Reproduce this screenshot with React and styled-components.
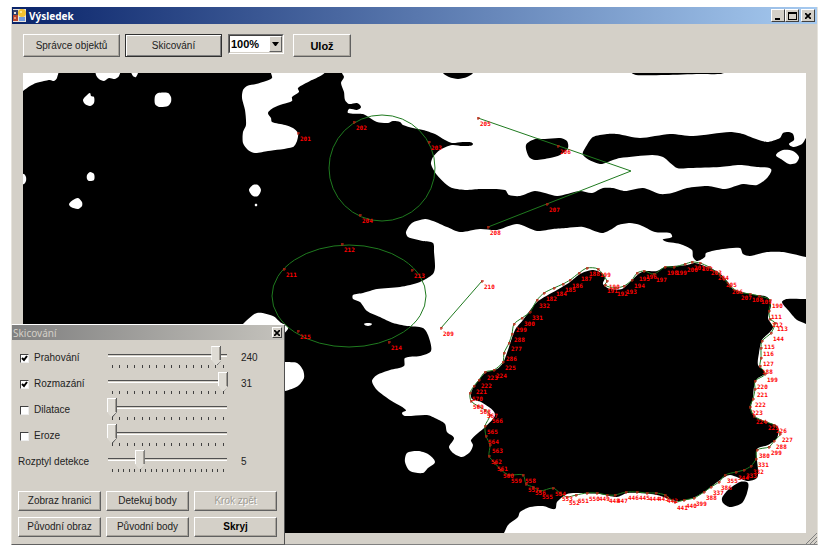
import React from "react";
import styled, { createGlobalStyle, css } from "styled-components";

const GlobalStyle = createGlobalStyle`
  * { box-sizing: border-box; }
  body {
    margin: 0;
    background: #ffffff;
    color: #222222;
    font-family: "Liberation Sans", Arial, sans-serif;
    font-size: 10px;
    line-height: 12px;
  }
`;

const face = "#d4d0c8";

const Desktop = styled.div`
  padding: 7px 0 2px 11px;
`;

const Window = styled.main`
  position: relative;
  background: ${face};
  border: 1px solid #e6e3dc;
  border-top: 0;
  border-bottom-color: #808080;
`;

const TitleBar = styled.header`
  display: flex;
  align-items: center;
  gap: 3px;
  height: 17px;
  padding: 0 2px 0 1px;
  background: linear-gradient(to right, #0a246a, #a6caf0);
`;

const Title = styled.h1`
  flex: 1;
  margin: 0;
  color: #ffffff;
  font: bold 10px/14px "Noto Sans", sans-serif;
`;

const CaptionGroup = styled.div`
  display: flex;
`;

const CaptionButton = styled.button`
  display: grid;
  place-items: center;
  width: 14px;
  height: 13px;
  padding: 0;
  margin-left: ${(p) => (p.$apart ? "2px" : "0")};
  background: ${face};
  border: 1px solid;
  border-color: #ffffff #404040 #404040 #ffffff;
  svg { display: block; }
`;

const Toolbar = styled.div`
  display: flex;
  align-items: flex-start;
  gap: 5px;
  padding: 10px 11px 16px;
`;

const Button = styled.button`
  width: ${(p) => p.$width || "100%"};
  height: ${(p) => (p.$tall ? "23px" : "20px")};
  padding: 0;
  background: ${face};
  color: #222222;
  border: 1px solid;
  border-color: #ffffff #606060 #606060 #ffffff;
  box-shadow: inset -1px -1px 0 #a8a49c;
  font: ${(p) => (p.$strong ? "bold " : "")}${(p) => (p.$tall && p.$strong ? "11px" : "10px")}/12px "Liberation Sans", Arial, sans-serif;
  ${(p) => p.$strong && css`color: #000000;`}
  ${(p) => p.$active && css`
    border-color: #303030;
    box-shadow: inset 1px 1px 0 #ffffff, inset -1px -1px 0 #808080;
  `}
  &:disabled {
    color: #a09c94;
    text-shadow: 1px 1px 0 #ffffff;
  }
`;

const ZoomBox = styled.label`
  position: relative;
  width: 56px;
  height: 20px;
  margin: 0 4px 0 1px;
  border: 1px solid;
  border-color: #707070 #ffffff #ffffff #707070;
  background: #ffffff;
`;

const ZoomSelect = styled.select`
  appearance: none;
  display: block;
  width: 100%;
  height: 18px;
  padding: 0 16px 0 1px;
  border: 1px solid;
  border-color: #404040 ${face} ${face} #404040;
  border-radius: 0;
  background: #ffffff;
  color: #000000;
  font: bold 11px/14px "Liberation Sans", Arial, sans-serif;
`;

const DropMark = styled.span`
  position: absolute;
  top: 1px;
  right: 1px;
  display: grid;
  place-items: center;
  width: 13px;
  height: 16px;
  background: ${face};
  border: 1px solid;
  border-color: #ffffff #606060 #606060 #ffffff;
  pointer-events: none;
`;

const Canvas = styled.div`
  padding: 0 11px 11px;
`;

const Picture = styled.svg`
  display: block;
  width: 100%;
  height: auto;
  background: #000000;
  text {
    fill: #ff0000;
    font-family: "DejaVu Sans Mono", monospace;
    font-size: 6px;
  }
`;

const Grip = styled.svg`
  position: absolute;
  right: 0;
  bottom: 0;
`;

const Dialog = styled.section`
  position: absolute;
  left: -1px;
  bottom: -1px;
  width: 274px;
  padding-bottom: 7px;
  background: ${face};
  border: 1px solid;
  border-color: #ffffff #505050 #606060 #e6e3dc;
`;

const DialogBar = styled.header`
  display: flex;
  align-items: center;
  justify-content: space-between;
  height: 15px;
  padding: 0 2px 0 1px;
  background: linear-gradient(to right, #808080, #c4c2bc);
`;

const DialogTitle = styled.h2`
  margin: 0;
  color: ${face};
  font: 10px/14px "Noto Sans", sans-serif;
`;

const CloseButton = styled(CaptionButton)`
  width: 10px;
  height: 11px;
`;

const Settings = styled.div`
  padding: 5px 7px 0 6px;
`;

const Row = styled.div`
  display: grid;
  grid-template-columns: 90px 119px 1fr;
  height: 26px;
`;

const Caption = styled.label`
  display: flex;
  align-items: center;
  gap: 5px;
  padding-left: ${(p) => (p.$plain ? "0" : "2px")};
`;

const Check = styled.input`
  appearance: none;
  flex: none;
  width: 9px;
  height: 9px;
  margin: 0;
  background: #ffffff;
  border: 1px solid;
  border-color: #404040 #eeeeee #eeeeee #404040;
`;

const CheckHolder = styled.span`
  display: grid;
  > * { grid-area: 1 / 1; }
  svg { pointer-events: none; }
`;

const SliderBox = styled.div`
  padding-top: 1px;
`;

const Slider = styled.input`
  appearance: none;
  display: block;
  width: calc(100% + 2px);
  height: 19px;
  margin: 0 -1px;
  background: linear-gradient(#505050, #505050) 1px 8px / 119px 1px no-repeat,
    linear-gradient(#ffffff, #ffffff) 1px 10px / 119px 1px no-repeat;
  &::-webkit-slider-thumb {
    appearance: none;
    width: 10px;
    height: 19px;
    background:
      linear-gradient(#606060, #606060) 100% 0 / 1px 14px no-repeat,
      linear-gradient(#a09c94, #a09c94) 8px 1px / 1px 13px no-repeat,
      linear-gradient(#ffffff, #ffffff) 0 0 / 1px 14px no-repeat,
      linear-gradient(#ffffff, #ffffff) 0 0 / 100% 1px no-repeat,
      linear-gradient(135deg, transparent 50%, #606060 50%) 100% 100% / 5px 5px no-repeat,
      #dedbd4;
    clip-path: polygon(0 0, 100% 0, 100% 14px, 6px 100%, 4px 100%, 0 14px);
  }
`;

const Ticks = styled.div`
  display: flex;
  justify-content: space-between;
  margin: 0 3px 0 4px;
  height: 3px;
`;

const Tick = styled.span`
  width: 1px;
  background: #404040;
`;

const Value = styled.output`
  align-self: center;
  padding-left: 14px;
  font-size: 10px;
`;

const Actions = styled.div`
  display: grid;
  grid-template-columns: repeat(3, 1fr);
  gap: 6px 5px;
  padding: 16px 7px 0 6px;
`;

/* Closed smooth curve through "x,y x,y ..." */
const parse = (s) => s.trim().split(/\s+/).map((p) => p.split(",").map(Number));

function curve(points) {
  const n = points.length;
  const tangent = (i) => {
    const a = points[(i - 1 + n) % n];
    const b = points[(i + 1) % n];
    const d = Math.hypot(b[0] - a[0], b[1] - a[1]) || 1;
    return [(b[0] - a[0]) / d, (b[1] - a[1]) / d];
  };
  let d = `M${points[0].join(",")}`;
  points.forEach((p, i) => {
    const q = points[(i + 1) % n];
    const k = Math.hypot(q[0] - p[0], q[1] - p[1]) * 0.25;
    const t = tangent(i);
    const u = tangent((i + 1) % n);
    d += `C${p[0] + t[0] * k},${p[1] + t[1] * k} ${q[0] - u[0] * k},${q[1] - u[1] * k} ${q[0]},${q[1]}`;
  });
  return `${d}Z`;
}

const white = [
  "15,65 58,65 57,78 54,81 50,80 44,81 36,83 30,86 23,91 15,97",
  "96,68 96,75 99,79 104,81 109,78 115,79 119,76 120,68",
  "131,70 133,76 136,77 138,70",
  "90,93 91,96 94,97 94,103 90,106 85,104 83,100 86,96",
  "155,96 158,93 168,93 171,97 171,102 168,106 159,107 155,104",
  "20,174 24,174 26,177 26,181 24,184 20,184",
  "87,175 90,172 94,174 94,180 89,181 87,179",
  "69,204 73,200 78,198 82,202 82,206 78,209 71,207",
  "249,190 253,185 258,185 261,190 258,196 253,196",
  "255,204 257,204 257,206 255,206",
  "236,331 243,324 257,313 273,316 280,322 288,329 270,340",
  "275,361 285,362 297,363 303,370 304,378 298,386 285,391 275,391",
  "271,66 271,73 272,78 266,81 256,84 247,86 243,90 242,98 245,110 246,125 243,132 243,143 248,150 255,153 268,151 293,147 297,141 298,133 293,128 285,125 272,122 271,118 268,113 273,108 283,104 292,101 292,97 299,92 298,88 310,81 322,75 330,66",
  "342,66 342,73 344,77 341,83 344,92 345,100 349,104 357,103 361,107 357,110 349,109 348,113 363,114 370,118 377,122 388,123 393,121 400,122 403,125 413,128 423,130 435,134 445,140 452,143 463,142 473,144 463,146 452,145 440,150 433,157 431,164 437,175 450,187 465,190 480,189 505,190 509,195 520,196 535,191 557,196 567,194 580,191 592,193 603,188 613,188 625,191 643,188 660,194 672,193 687,188 708,186 725,189 743,184 757,185 767,178 771,169 757,167 740,165 720,167 690,168 677,168 663,157 652,155 620,158 613,160 600,164 583,155 587,145 593,137 607,134 617,134 640,138 670,134 693,136 730,132 743,134 753,138 767,142 780,138 783,133 789,132 793,134 794,140 789,144 793,147 802,144 806,138 814,130 814,66",
  "776,155 783,150 793,151 799,157 796,163 789,164 781,159",
  "406,232 412,223 425,219 433,221 447,227 460,232 480,229 497,230 517,224 537,231 553,229 567,228 583,227 602,233 612,229 618,225 630,223 640,225 655,232 670,233 672,237 663,240 680,244 692,250 693,257 697,261 705,257 706,253 723,249 740,248 743,254 750,256 767,252 783,252 806,257 815,258 815,542 498,542 504,533 508,525 518,517 520,512 530,507 543,506 555,509 557,502 567,494 575,493 600,494 617,497 627,493 640,493 657,495 677,501 693,498 707,490 720,480 730,475 747,481 757,478 758,470 757,460 757,449 768,445 777,438 778,427 767,422 755,417 751,408 753,397 754,387 757,379 765,373 758,365 759,353 762,340 770,332 773,327 768,318 771,305 767,297 750,294 733,289 728,282 718,272 707,267 695,263 687,265 665,267 657,271 647,271 640,273 630,282 622,289 610,289 603,284 605,278 602,273 592,270 580,274 570,282 557,290 537,302 523,320 515,330 508,350 503,363 497,369 485,373 475,385 471,393 472,399 481,402 495,414 485,427 471,440 473,445 470,452 462,457 453,453 449,447 454,438 447,432 445,424 437,419 427,415 405,416 402,413 406,410 390,400 377,390 372,381 377,375 390,370 404,366 405,358 420,356 431,351 428,335 423,328 407,326 393,323 380,317 367,311 360,302 353,299 353,295 363,293 377,289 400,287 420,282 433,274 435,267 434,252 433,243 423,241 408,237",
  "405,462 407,453 418,451 428,454 435,462 428,468 423,473 410,471",
  "364,324 368,323 372,324 368,326",
];

const black = [
  "443,68 443,73 449,77 458,79 467,77 473,73 473,68",
  "631,72 636,75 665,75 700,74 720,74 726,72",
  "526,145 535,139 545,139 560,138 567,141 568,148 560,155 550,158 535,160 529,157",
  "782,302 787,299 806,299 815,299 815,330 806,324 797,320 788,310",
  "722,498 728,490 740,482 748,483 747,493 742,503 730,507 723,503",
];

/* number, x, y of each point on the detected border */
const border = `221,477,392 222,482,386 223,488,378 224,497,376 225,506,368 286,507,359 277,512,349
288,515,340 299,517,330 300,525,324 331,533,318 332,540,306 182,547,299 184,557,294 185,566,290
186,573,286 187,582,279 188,590,274 199,601,275 190,610,287 191,608,291 192,618,294 193,627,292
194,635,286 195,640,279 196,647,277 197,657,280 198,668,273 199,677,273 200,688,270 201,695,268
202,703,269 203,712,273 204,719,278 205,727,285 206,733,292 207,742,298 108,753,300 109,762,302
190,773,306 111,772,317 112,773,325 113,778,329 144,774,339 115,765,347 116,764,354 127,764,364
188,763,372 199,768,380 220,758,387 221,758,395 222,756,405 223,753,413 224,757,422 225,769,428
226,777,431 227,783,440 288,777,447 299,772,453 380,760,456 331,759,465 332,754,472 333,747,476
344,739,478 355,728,481 386,722,488 337,714,493 388,707,498 399,697,504 440,687,506 441,678,508
442,668,501 443,659,499 444,650,499 445,640,498 446,629,498 447,618,501 448,610,501 449,600,499
550,590,499 551,579,501 552,570,503 553,563,499 554,556,494 555,543,497 556,536,493 557,529,490
558,526,481 559,512,481 560,504,476 561,498,469 562,492,462 563,493,451 564,489,442 565,488,432
566,493,421 567,488,416 568,481,412 569,474,407 570,473,399`;

const borderPoints = parse(border).map(([n, x, y]) => ({ n, x: x - 3, y: y - 6 }));

const markers = parse(`201,298,133 202,354,122 203,429,142 204,360,215 205,478,118 206,558,146
207,547,204 208,488,227 209,441,328 210,482,281 211,284,269 212,342,244 213,412,270 214,389,342
215,298,331`).map(([n, x, y]) => ({ n, x, y }));

function Point({ n, x, y }) {
  return (
    <g>
      <path d={`M${x - 1} ${y}h3M${x} ${y - 1}v3`} stroke="#c02010" />
      <text x={x + 2} y={y + 8} fontWeight="bold">{n}</text>
    </g>
  );
}

function ResultPicture() {
  return (
    <Picture viewBox="23 73 783 460" role="img" aria-label="Výsledek">
      <g fill="#ffffff">{white.map((s) => <path key={s} d={curve(parse(s))} />)}</g>
      <g fill="#000000">{black.map((s) => <path key={s} d={curve(parse(s))} />)}</g>
      <g fill="none" stroke="#1f7a1f">
        <circle cx="382" cy="168" r="53" />
        <ellipse cx="349" cy="296" rx="77" ry="51" />
        <path d="M478 118L631 171L488 227M441 328L482 281" />
        <path d={curve(borderPoints.map((p) => [p.x, p.y]))} />
      </g>
      {borderPoints.map((p, i) => <Point key={i} {...p} />)}
      {markers.map((p) => <Point key={p.n} {...p} />)}
    </Picture>
  );
}

function Cross() {
  return (
    <svg width="6" height="6" viewBox="0 0 7 7">
      <path d="M0 0L7 7M7 0L0 7" stroke="#000000" strokeWidth="2" />
    </svg>
  );
}

function AppIcon() {
  return (
    <svg width="13" height="13" viewBox="0 0 13 13" aria-hidden="true">
      <rect width="13" height="13" fill="#e8e4dc" />
      <rect y="1" width="5" height="5" fill="#35406a" />
      <rect y="6" width="5" height="6" fill="#b8452c" />
      <rect x="1" y="3" width="2" height="2" fill="#e8e4dc" />
      <rect x="1" y="8" width="2" height="2" fill="#e89a80" />
      <rect x="6" y="8" width="6" height="4" fill="#6f9be0" />
      <circle cx="9" cy="4" r="4" fill="#f2c230" />
      <circle cx="8" cy="3" r="1" fill="#fff0a8" />
    </svg>
  );
}

const settings = [
  { label: "Prahování", checked: true, value: 240, max: 255, ticks: 16, shown: "240" },
  { label: "Rozmazání", checked: true, value: 31, max: 31, ticks: 16, shown: "31" },
  { label: "Dilatace", checked: false, value: 0, max: 15, ticks: 16 },
  { label: "Eroze", checked: false, value: 0, max: 15, ticks: 16 },
  { label: "Rozptyl detekce", value: 5, max: 20, ticks: 21, shown: "5" },
];

function Setting({ label, checked, value, max, ticks, shown }) {
  const [on, setOn] = React.useState(checked);
  const plain = checked === undefined;
  const id = `range-${label.replace(/\s/g, "-")}`;
  return (
    <Row>
      <Caption $plain={plain} htmlFor={plain ? id : undefined}>
        {!plain && (
          <CheckHolder>
            <Check type="checkbox" checked={on} onChange={() => setOn(!on)} />
            {on && (
              <svg width="9" height="9" viewBox="0 0 9 9">
                <path d="M2 4L4 6L7 2" fill="none" stroke="#000000" strokeWidth="2" />
              </svg>
            )}
          </CheckHolder>
        )}
        {label}
      </Caption>
      <SliderBox>
        <Slider id={id} type="range" aria-label={label} min="0" max={max} defaultValue={value} />
        <Ticks>{Array.from({ length: ticks }, (_, i) => <Tick key={i} />)}</Ticks>
      </SliderBox>
      {shown && <Value htmlFor={id}>{shown}</Value>}
    </Row>
  );
}

export default function App() {
  return (
    <Desktop>
      <GlobalStyle />
      <Window>
        <TitleBar>
          <AppIcon />
          <Title>Výsledek</Title>
          <CaptionGroup>
            <CaptionButton aria-label="Minimalizovat">
              <svg width="8" height="8" viewBox="0 0 8 8"><path d="M1 6h5v2H1z" /></svg>
            </CaptionButton>
            <CaptionButton aria-label="Maximalizovat">
              <svg width="9" height="8" viewBox="0 0 9 8">
                <path d="M0 0h9v8H0zM1 2v5h7V2z" fillRule="evenodd" />
              </svg>
            </CaptionButton>
            <CaptionButton $apart aria-label="Zavřít"><Cross /></CaptionButton>
          </CaptionGroup>
        </TitleBar>
        <Toolbar>
          <Button $tall $width="97px">Správce objektů</Button>
          <Button $tall $active $width="97px">Skicování</Button>
          <ZoomBox>
            <ZoomSelect aria-label="Zvětšení" defaultValue="100%">
              <option>50%</option>
              <option>100%</option>
              <option>200%</option>
            </ZoomSelect>
            <DropMark>
              <svg width="7" height="4" viewBox="0 0 7 4"><path d="M0 0h7L4 4H3z" /></svg>
            </DropMark>
          </ZoomBox>
          <Button $tall $strong $width="58px">Ulož</Button>
        </Toolbar>
        <Canvas>
          <ResultPicture />
        </Canvas>
        <Grip width="11" height="11" viewBox="0 0 11 11" aria-hidden="true">
          <path d="M0 11L11 0M4 11L11 4M8 11L11 8" stroke="#808080" />
        </Grip>
        <Dialog aria-label="Skicování">
          <DialogBar>
            <DialogTitle>Skicování</DialogTitle>
            <CloseButton aria-label="Zavřít"><Cross /></CloseButton>
          </DialogBar>
          <Settings>
            {settings.map((s) => <Setting key={s.label} {...s} />)}
          </Settings>
          <Actions>
            <Button>Zobraz hranici</Button>
            <Button>Detekuj body</Button>
            <Button disabled>Krok zpět</Button>
            <Button>Původní obraz</Button>
            <Button>Původní body</Button>
            <Button $strong>Skryj</Button>
          </Actions>
        </Dialog>
      </Window>
    </Desktop>
  );
}
